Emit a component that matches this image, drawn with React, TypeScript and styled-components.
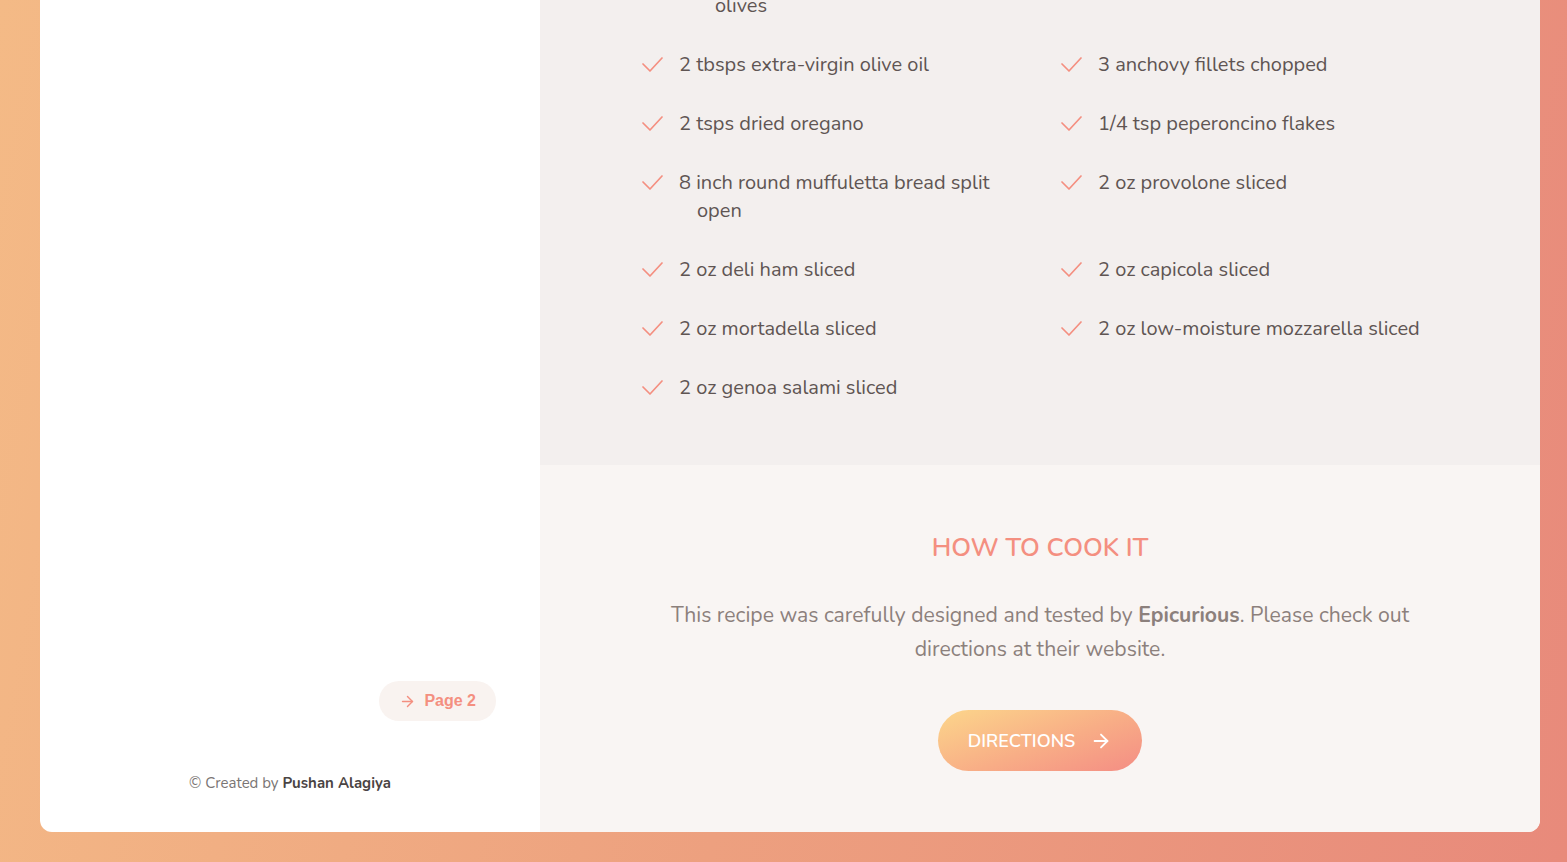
import React from "react";
import styled, { createGlobalStyle } from "styled-components";
import { ArrowRight } from "lucide-react";

const GlobalStyle = createGlobalStyle`
  * { box-sizing: border-box; }
  html, body {
    margin: 0;
    padding: 0;
    min-height: 100%;
  }
  body {
    background: linear-gradient(100deg, #f4ba86 0%, #eda07f 50%, #e88a7b 100%);
    font-family: "Nunito", "Lato", "Open Sans", sans-serif;
    overflow: hidden;
  }
`;

const Page = styled.div`
  padding: 0 27px 30px 40px;
  height: 862px;
  overflow: hidden;
  display: flex;
  flex-direction: column;
  justify-content: flex-end;
`;

const Card = styled.div`
  flex: none;
  display: grid;
  grid-template-columns: 500px 1fr;
  background: #fff;
  border-radius: 0 0 12px 12px;
  overflow: hidden;
`;

const Sidebar = styled.aside`
  display: flex;
  flex-direction: column;
  justify-content: flex-end;
  align-items: stretch;
  padding: 0 44px 39px 44px;
`;

const PageButton = styled.button`
  align-self: flex-end;
  display: inline-flex;
  align-items: center;
  gap: 8px;
  height: 40px;
  padding: 0 20px;
  border: none;
  border-radius: 20px;
  background: #f9f3f0;
  color: #f48f80;
  font-family: "Liberation Sans", Arial, sans-serif;
  font-weight: 700;
  font-size: 16px;
  cursor: pointer;
`;

const Credit = styled.p`
  margin: 52px 0 0;
  text-align: center;
  font-size: 15px;
  line-height: 20px;
  color: #7a7574;
  strong {
    color: #4a4443;
    font-weight: 700;
  }
`;

const Main = styled.main`
  display: flex;
  flex-direction: column;
`;

const IngredientsSection = styled.section`
  background: #f3efee;
  padding: 16px 60px 63px 102px;
`;

const IngredientList = styled.ul`
  list-style: none;
  margin: -10px 0 0;
  padding: 0;
  display: grid;
  grid-template-columns: 380px 380px;
  column-gap: 39px;
  row-gap: 31px;
  font-size: 20px;
  line-height: 28px;
  color: #5f5553;
`;

const Continuation = styled.li`
  grid-column: 1 / -1;
  padding-left: 73px;
`;

const Item = styled.li`
  display: flex;
  align-items: flex-start;
  gap: 16px;
`;

const Tick = styled.svg`
  flex: none;
  width: 21px;
  height: 28px;
  fill: none;
  stroke: #f48f80;
  stroke-width: 1.7;
  stroke-linecap: round;
  stroke-linejoin: round;
`;

const ItemText = styled.span`
  padding-left: 18px;
  text-indent: -18px;
`;

const CookSection = styled.section`
  background: #f9f5f3;
  padding: 67px 100px 61px;
  display: flex;
  flex-direction: column;
  align-items: center;
  text-align: center;
`;

const Heading = styled.h2`
  margin: 0;
  font-size: 25.5px;
  line-height: 32px;
  font-weight: 600;
  color: #f48f80;
  text-transform: uppercase;
`;

const Lead = styled.p`
  margin: 34px 0 0;
  max-width: 780px;
  font-size: 21.2px;
  line-height: 34px;
  color: #8c807c;
  strong {
    font-weight: 700;
  }
`;

const DirectionsButton = styled.button`
  margin-top: 44px;
  display: inline-flex;
  align-items: center;
  gap: 15px;
  height: 61px;
  padding: 0 30px 0 30px;
  border: none;
  border-radius: 31px;
  background: linear-gradient(160deg, #fcd68b 0%, #f8ad86 55%, #f48d84 100%);
  color: #fff;
  font-family: "Nunito", "Lato", "Open Sans", sans-serif;
  font-size: 18px;
  font-weight: 600;
  text-transform: uppercase;
  cursor: pointer;
`;

const ingredients = [
  ["2 tbsps extra-virgin olive oil", "3 anchovy fillets chopped"],
  ["2 tsps dried oregano", "1/4 tsp peperoncino flakes"],
  ["8 inch round muffuletta bread split open", "2 oz provolone sliced"],
  ["2 oz deli ham sliced", "2 oz capicola sliced"],
  ["2 oz mortadella sliced", "2 oz low-moisture mozzarella sliced"],
  ["2 oz genoa salami sliced"],
].flat();

export default function App() {
  return (
    <>
      <GlobalStyle />
      <Page>
        <Card>
          <Sidebar>
            <PageButton>
              <ArrowRight size={17} strokeWidth={2} />
              Page 2
            </PageButton>
            <Credit>
              © Created by <strong>Pushan Alagiya</strong>
            </Credit>
          </Sidebar>
          <Main>
            <IngredientsSection>
              <IngredientList>
                <Continuation>olives</Continuation>
                {ingredients.map((name) => (
                  <Item key={name}>
                    <Tick viewBox="0 0 21 28">
                      <polyline points="1,13 8,20 20,7" />
                    </Tick>
                    <ItemText>{name}</ItemText>
                  </Item>
                ))}
              </IngredientList>
            </IngredientsSection>
            <CookSection>
              <Heading>How to cook it</Heading>
              <Lead>
                This recipe was carefully designed and tested by{" "}
                <strong>Epicurious</strong>. Please check out directions at
                their website.
              </Lead>
              <DirectionsButton>
                Directions
                <ArrowRight size={22} strokeWidth={2} />
              </DirectionsButton>
            </CookSection>
          </Main>
        </Card>
      </Page>
    </>
  );
}
